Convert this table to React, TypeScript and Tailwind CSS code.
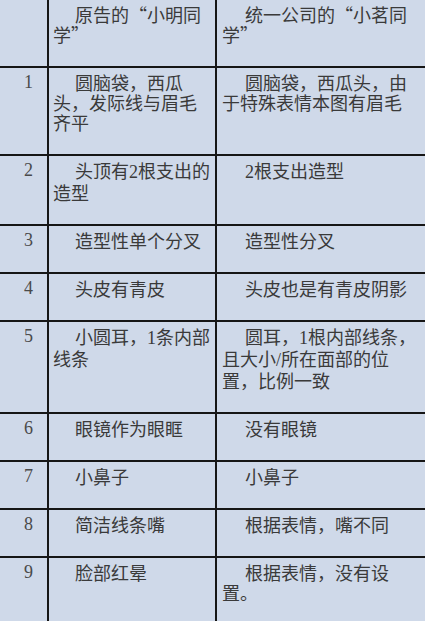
import React from 'react';

// Comparison table: 原告 vs 统一公司
const rows: [string, string, string][] = [
  ['', '原告的“小明同学”', '统一公司的“小茗同学”'],
  ['1', '圆脑袋，西瓜头，发际线与眉毛齐平', '圆脑袋，西瓜头，由于特殊表情本图有眉毛'],
  ['2', '头顶有2根支出的造型', '2根支出造型'],
  ['3', '造型性单个分叉', '造型性分叉'],
  ['4', '头皮有青皮', '头皮也是有青皮阴影'],
  ['5', '小圆耳，1条内部线条', '圆耳，1根内部线条，且大小/所在面部的位置，比例一致'],
  ['6', '眼镜作为眼眶', '没有眼镜'],
  ['7', '小鼻子', '小鼻子'],
  ['8', '简洁线条嘴', '根据表情，嘴不同'],
  ['9', '脸部红晕', '根据表情，没有设置。'],
];

// latin runs (digits, slash) get the serif face, the rest stays CJK
const Mixed: React.FC<{ text: string }> = ({ text }) => (
  <>
    {text.split(/([0-9/]+)/).map((part, i) =>
      /^[0-9/]+$/.test(part) ? (
        <span key={i} className="font-['Liberation_Serif',serif]">
          {part}
        </span>
      ) : (
        <React.Fragment key={i}>{part}</React.Fragment>
      )
    )}
  </>
);

const App: React.FC = () => {
  return (
    <div
      lang="zh-CN"
      className="min-h-screen w-[425px] overflow-hidden bg-[#cfd9e9] font-['Noto_Sans_CJK_SC',sans-serif] text-[18px] leading-[20px] text-[#3a3a3a]"
    >
      <div className="grid grid-cols-[49px_168px_208px]">
        {rows.map(([num, left, right], r) => (
          <React.Fragment key={r}>
            <div className="border-b-2 border-r-2 border-[#161616] pb-[22px] pl-[10px] pt-[4px] text-center font-['Liberation_Serif',serif] text-[#4a4a4a]">
              {num}
            </div>
            <div className="border-b-2 border-r-2 border-[#161616] pb-[22px] pl-[4px] pr-[2px] pt-[4px] indent-[22px]">
              <Mixed text={left} />
            </div>
            <div className="border-b-2 border-[#161616] pb-[22px] pl-[5px] pr-[5px] pt-[4px] indent-[23px]">
              <Mixed text={right} />
            </div>
          </React.Fragment>
        ))}
      </div>
    </div>
  );
};

export default App;
